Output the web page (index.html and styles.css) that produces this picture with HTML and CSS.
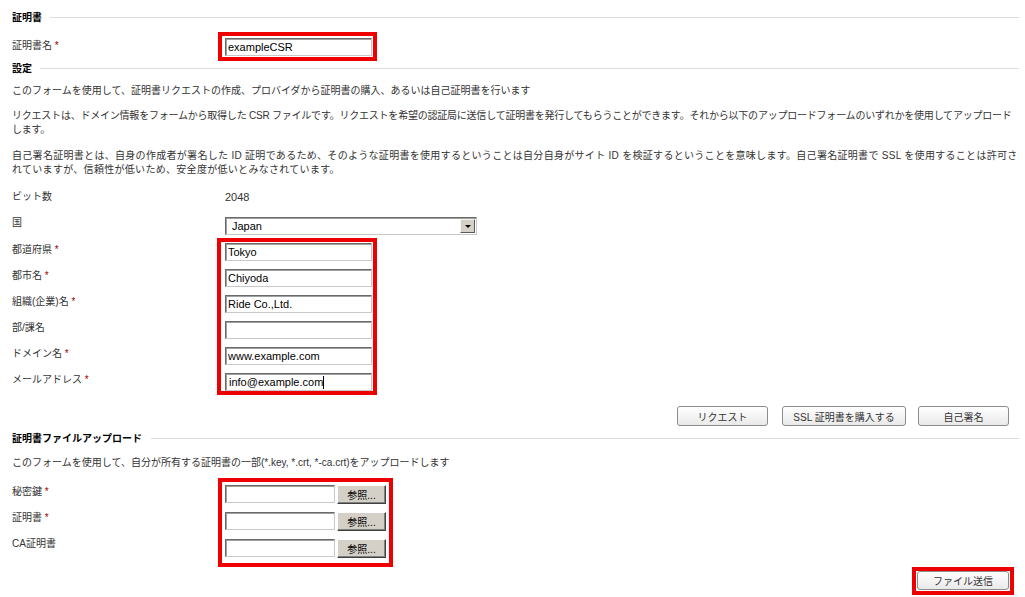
FILE: index.html
```html
<!DOCTYPE html>
<html lang="ja">
<head>
    <meta charset="UTF-8">
    <title>証明書</title>
    <link rel="stylesheet" href="styles.css">
</head>
<body>
    <div class="page">
        <div class="section-head"><span>証明書</span></div>
        <div class="row row-name">
            <div class="label">証明書名 <em>*</em></div>
            <div class="mark mark-name">
                <input class="text" type="text" value="exampleCSR">
            </div>
        </div>

        <div class="section-head head-settings"><span>設定</span></div>
        <p class="p1">このフォームを使用して、証明書リクエストの作成、プロバイダから証明書の購入、あるいは自己証明書を行います</p>
        <p class="p2">リクエストは、ドメイン情報をフォームから取得した CSR ファイルです。リクエストを希望の認証局に送信して証明書を発行してもらうことができます。それから以下のアップロードフォームのいずれかを使用してアップロードします。</p>
        <p class="p3">自己署名証明書とは、自身の作成者が署名した ID 証明であるため、そのような証明書を使用するということは自分自身がサイト ID を検証するということを意味します。自己署名証明書で SSL を使用することは許可されていますが、信頼性が低いため、安全度が低いとみなされています。</p>

        <div class="row row-bits">
            <div class="label">ビット数</div>
            <div class="value">2048</div>
        </div>
        <div class="row row-country">
            <div class="label">国</div>
            <div class="select">
                <span class="select-text">Japan</span>
                <span class="select-arrow"></span>
            </div>
        </div>

        <div class="group group-domain">
            <div class="labels">
                <div class="label">都道府県 <em>*</em></div>
                <div class="label">都市名 <em>*</em></div>
                <div class="label">組織(企業)名 <em>*</em></div>
                <div class="label">部/課名</div>
                <div class="label">ドメイン名 <em>*</em></div>
                <div class="label">メールアドレス <em>*</em></div>
            </div>
            <div class="mark mark-domain">
                <input class="text" type="text" value="Tokyo">
                <input class="text" type="text" value="Chiyoda">
                <input class="text" type="text" value="Ride Co.,Ltd.">
                <input class="text" type="text" value="">
                <input class="text" type="text" value="www.example.com">
                <div class="text text-caret">info@example.com<span class="caret"></span></div>
            </div>
        </div>

        <div class="actions">
            <button class="btn btn-request">リクエスト</button>
            <button class="btn btn-buy">SSL 証明書を購入する</button>
            <button class="btn btn-self">自己署名</button>
        </div>

        <div class="section-head head-upload"><span>証明書ファイルアップロード</span></div>
        <p class="p4">このフォームを使用して、自分が所有する証明書の一部(*.key, *.crt, *-ca.crt)をアップロードします</p>

        <div class="group group-files">
            <div class="labels">
                <div class="label">秘密鍵 <em>*</em></div>
                <div class="label">証明書 <em>*</em></div>
                <div class="label">CA証明書</div>
            </div>
            <div class="mark mark-files">
                <div class="file"><input class="text file-text" type="text"><button class="browse">参照...</button></div>
                <div class="file"><input class="text file-text" type="text"><button class="browse">参照...</button></div>
                <div class="file"><input class="text file-text" type="text"><button class="browse">参照...</button></div>
            </div>
        </div>

        <div class="submit">
            <div class="mark mark-submit">
                <button class="btn btn-send">ファイル送信</button>
            </div>
        </div>
    </div>
</body>
</html>
```

FILE: styles.css
```css
body {
    margin: 0;
    padding: 0;
    background-color: #fff;
    color: #333;
    font-family: 'Liberation Sans', 'Noto Sans CJK JP', sans-serif;
    font-size: 10px;
}

.page {
    padding: 10px 6px 0 12px;
}

.section-head {
    display: flex;
    align-items: center;
    line-height: 14px;
    font-weight: bold;
    color: #000;
}

.section-head span {
    position: relative;
    top: 1px;
}

.section-head::after {
    content: "";
    flex: 1;
    border-top: 1px solid #dcdcdc;
    margin-left: 8px;
}

.head-upload::after {
    margin-left: 9px;
}

p {
    margin: 0;
    line-height: 14px;
}

.p1 { margin-top: 9px; }
.p2 { margin-top: 11px; letter-spacing: -0.22px; }
.p3 { margin-top: 12px; letter-spacing: 0.3px; line-height: 13.5px; }
.p4 { margin-top: 11px; }

em {
    font-style: normal;
    color: #a00000;
}

.row {
    display: flex;
    align-items: flex-start;
}

.label {
    width: 213px;
    line-height: 14px;
    flex-shrink: 0;
}

.row-name {
    margin-top: 8px;
}

.row-name .label {
    padding-top: 7px;
}

.row-bits {
    margin-top: 14px;
    height: 26px;
}

.value {
    line-height: 14px;
    font-size: 11px;
}

.row-country {
    height: 27px;
}

.mark {
    border: 4px solid #ee0000;
}

.mark-name {
    padding: 2px 1px 1px 3px;
    margin-left: -7px;
}

.text {
    box-sizing: border-box;
    display: block;
    width: 147px;
    height: 18px;
    margin: 0;
    padding: 0 2px;
    border: 1px solid #c8c8c8;
    border-top-color: #6a6a6a;
    border-left-color: #6a6a6a;
    box-shadow: inset 1px 1px 0 #a0a0a0;
    background: #fff;
    color: #000;
    font-family: 'Liberation Sans', 'Noto Sans CJK JP', sans-serif;
    font-size: 11px;
    line-height: 16px;
    outline: none;
}

.text-caret {
    padding-left: 3px;
}

.caret {
    display: inline-block;
    width: 1px;
    height: 13px;
    background: #000;
    vertical-align: -3px;
}

.select {
    box-sizing: border-box;
    position: relative;
    margin-top: 1px;
    width: 252px;
    height: 18px;
    border: 1px solid #c8c8c8;
    border-top-color: #6a6a6a;
    border-left-color: #6a6a6a;
    box-shadow: inset 1px 1px 0 #a0a0a0;
    background: #fff;
}

.select-text {
    display: block;
    padding-left: 6px;
    line-height: 17px;
    font-size: 11px;
    color: #000;
}

.select-arrow {
    position: absolute;
    top: 1px;
    right: 1px;
    box-sizing: border-box;
    width: 15px;
    height: 14px;
    background: #d4d0c8;
    border: 1px solid;
    border-color: #f4f4f4 #5a5a5a #5a5a5a #f4f4f4;
}

.select-arrow::after {
    content: "";
    position: absolute;
    left: 4px;
    top: 5px;
    border-left: 3px solid transparent;
    border-right: 3px solid transparent;
    border-top: 3px solid #000;
}

.group {
    display: flex;
    align-items: flex-start;
}

.labels .label {
    height: 18px;
    margin-bottom: 8px;
}

.labels .label:last-child {
    margin-bottom: 0;
}

.mark-domain {
    padding: 1px 1px 0 4px;
    margin: -5px 0 -4px -8px;
}

.mark-domain .text {
    margin-bottom: 8px;
}

.mark-domain .text:last-child {
    margin-bottom: 0;
}

.actions {
    display: flex;
    justify-content: flex-end;
    gap: 13px;
    margin-top: 15px;
    padding-right: 10px;
}

.btn {
    box-sizing: border-box;
    height: 20px;
    padding: 0;
    border: 1px solid #8c8c8c;
    border-radius: 3px;
    background: linear-gradient(#ffffff, #e9e9e9);
    color: #333;
    font-family: 'Liberation Sans', 'Noto Sans CJK JP', sans-serif;
    font-size: 10px;
}

.btn-request { width: 91px; }
.btn-buy { width: 124px; margin-left: 1px; }
.btn-self { width: 91px; margin-left: -1px; }

.head-upload {
    margin-top: 5px;
}

.group-files {
    margin-top: 15px;
}

.mark-files {
    padding: 3px 3px 5px 3px;
    margin: -7px 0 -9px -7px;
}

.file {
    display: flex;
    gap: 2px;
    margin-bottom: 8px;
}

.file:last-child {
    margin-bottom: 0;
}

.file-text {
    width: 110px;
}

.browse {
    box-sizing: border-box;
    width: 49px;
    height: 19px;
    padding: 0;
    background: #d4d0c8;
    border: 1px solid;
    border-color: #ffffff #404040 #404040 #ffffff;
    box-shadow: inset -1px -1px 0 #808080;
    color: #000;
    font-family: 'Liberation Sans', 'Noto Sans CJK JP', sans-serif;
    font-size: 10px;
}

.submit {
    display: flex;
    justify-content: flex-end;
    margin-top: 9px;
    padding-right: 5px;
}

.mark-submit {
    padding: 0 1px 1px 1px;
}

.btn-send {
    display: block;
    width: 92px;
    height: 19px;
}
```
